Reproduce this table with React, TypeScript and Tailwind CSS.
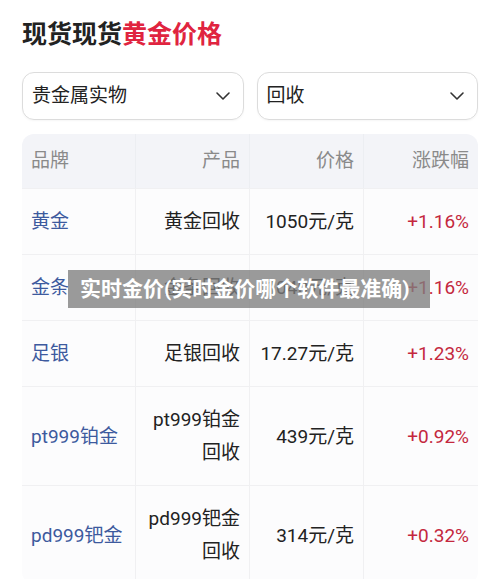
import React from "react";

const rows = [
  { brand: "黄金", product: ["黄金回收"], price: "1050元/克", change: "+1.16%" },
  { brand: "金条", product: ["金条回收"], price: "1040元/克", change: "+1.16%" },
  { brand: "足银", product: ["足银回收"], price: "17.27元/克", change: "+1.23%" },
  { brand: "pt999铂金", product: ["pt999铂金", "回收"], price: "439元/克", change: "+0.92%" },
  { brand: "pd999钯金", product: ["pd999钯金", "回收"], price: "314元/克", change: "+0.32%" },
];

function Chevron() {
  return (
    <svg width="16" height="10" viewBox="0 0 16 10" fill="none">
      <path d="M2 2l6 6 6-6" stroke="#333" strokeWidth="1.6" strokeLinecap="round" strokeLinejoin="round" />
    </svg>
  );
}

export default function App() {
  return (
    <div
      className="relative w-[500px] h-[579px] overflow-hidden bg-white px-[22px] pt-[19px]"
      style={{ fontFamily: "Roboto, 'Noto Sans CJK SC', sans-serif" }}
    >
      <h1 className="text-[25px] leading-[32px] font-bold text-[#222]">
        现货现货<span className="text-[#e0243f]">黄金价格</span>
      </h1>

      <div className="mt-[21px] flex gap-[13px]">
        <div className="flex h-[48px] flex-1 items-center justify-between rounded-[12px] border border-[#dcdcdc] pl-[9px] pr-[12px] shadow-[0_1px_2px_rgba(0,0,0,0.04)]">
          <span className="text-[19px] text-[#222]">贵金属实物</span>
          <Chevron />
        </div>
        <div className="flex h-[48px] flex-1 items-center justify-between rounded-[12px] border border-[#dcdcdc] pl-[9px] pr-[12px] shadow-[0_1px_2px_rgba(0,0,0,0.04)]">
          <span className="text-[19px] text-[#222]">回收</span>
          <Chevron />
        </div>
      </div>

      <div className="mt-[14px] overflow-hidden rounded-[12px] bg-[#fcfcfd]">
        <div className="grid h-[54px] grid-cols-4 bg-[#f3f4f8] text-[19px] text-[#8a8a8a]">
          <div className="flex items-center border-r border-[#eceef2] pl-[9px]">品牌</div>
          <div className="flex items-center justify-end border-r border-[#eceef2] pr-[9px]">产品</div>
          <div className="flex items-center justify-end border-r border-[#eceef2] pr-[9px]">价格</div>
          <div className="flex items-center justify-end pr-[9px]">涨跌幅</div>
        </div>
        {rows.map((r) => (
          <div key={r.brand} className="grid grid-cols-4 border-t border-[#f0f0f2] text-[19px] leading-[33px]">
            <div className="flex items-center border-r border-[#f0f0f2] py-[16px] pl-[9px] text-[#3d5a9e]">{r.brand}</div>
            <div className="flex flex-col items-end justify-center border-r border-[#f0f0f2] py-[16px] pr-[9px] text-[#222]">
              {r.product.map((p) => (
                <span key={p}>{p}</span>
              ))}
            </div>
            <div className="flex items-center justify-end border-r border-[#f0f0f2] py-[16px] pr-[9px] text-[#222]">{r.price}</div>
            <div className="flex items-center justify-end py-[16px] pr-[9px] text-[#c4283e]">{r.change}</div>
          </div>
        ))}
      </div>

      <div className="absolute left-[68px] top-[270px] flex h-[38px] w-[362px] items-center bg-[rgba(125,125,125,0.78)] pl-[12px]">
        <span className="text-[21px] font-bold leading-none text-white whitespace-nowrap">实时金价(实时金价哪个软件最准确)</span>
      </div>
    </div>
  );
}
